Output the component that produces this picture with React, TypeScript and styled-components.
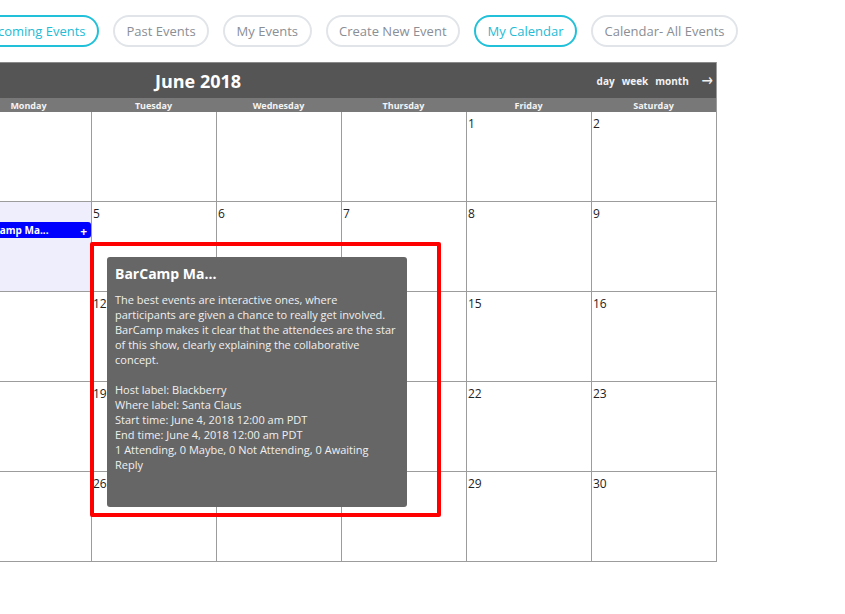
import React from "react";
import styled, { createGlobalStyle } from "styled-components";

const Global = createGlobalStyle`
  html, body { margin: 0; padding: 0; background: #fff; }
  body { font-family: "Open Sans", "Liberation Sans", sans-serif; }
`;

const Page = styled.div`
  position: relative;
  width: 845px;
  height: 614px;
  overflow: hidden;
`;

const TabRow = styled.div`
  display: flex;
  gap: 14px;
  margin-left: -33px;
  padding-top: 15px;
  white-space: nowrap;
`;

const Tab = styled.div<{ $active?: boolean }>`
  box-sizing: border-box;
  height: 32px;
  padding: 0 11.5px;
  display: flex;
  align-items: center;
  border-radius: 16px;
  border: 2px solid ${(p) => (p.$active ? "#22c1d9" : "#e1e5e9")};
  color: ${(p) => (p.$active ? "#22bcd6" : "#8a8e95")};
  font-size: 13px;
  flex-shrink: 0;
`;

const Calendar = styled.div`
  margin-left: -159px;
  margin-top: 15px;
  width: 876px;
  box-sizing: border-box;
  border-right: 1px solid #9c9c9c;
`;

const Header = styled.div`
  height: 36px;
  background: #555555;
  border-top: 1px solid #8a8a8a;
  box-sizing: border-box;
  display: flex;
  align-items: center;
  color: #fff;
`;

const LeftNav = styled.div`
  width: 314px;
  font-size: 13px;
  font-weight: 700;
  padding-left: 6px;
  box-sizing: border-box;
`;

const Title = styled.div`
  font-size: 18px;
  font-weight: 700;
  flex: 1;
  line-height: 1;
  padding-top: 1px;
`;

const RightNav = styled.div`
  display: flex;
  gap: 7px;
  font-size: 10px;
  font-weight: 700;
  padding-right: 2px;
  align-items: center;
  color: #f2f2f2;
`;

const Arrow = styled.span`
  margin-left: 4px;
  font-size: 17px;
  font-weight: 400;
  line-height: 1;
  font-family: "DejaVu Sans", sans-serif;
  transform: scaleX(0.8);
`;

const DayHead = styled.div`
  display: grid;
  grid-template-columns: repeat(7, 125px);
  height: 14px;
  background: #787878;
  color: #f4f4f4;
  font-size: 9px;
  font-weight: 700;
  line-height: 15px;
  text-align: center;
`;

const Week = styled.div`
  display: grid;
  grid-template-columns: repeat(7, 125px);
  height: 90px;
  box-sizing: border-box;
  border-bottom: 1px solid #9c9c9c;
`;

const Cell = styled.div<{ $shade?: boolean }>`
  position: relative;
  box-sizing: border-box;
  border-left: 1px solid #9c9c9c;
  background: ${(p) => (p.$shade ? "#eeeefc" : "#fff")};
  padding: 4px 1px 2px;
`;

const DayNum = styled.div`
  font-size: 12px;
  line-height: 16px;
  color: #222;
`;

const EventBar = styled.div`
  margin-left: 4px;
  margin-right: -1px;
  height: 16px;
  background: #0000ff;
  border-radius: 3px;
  color: #fff;
  font-size: 10px;
  font-weight: 700;
  display: flex;
  align-items: center;
  justify-content: space-between;
  padding: 0 4px;
  box-sizing: border-box;
`;

const Plus = styled.span`
  font-size: 12px;
  line-height: 1;
  padding-top: 3px;
`;

const Highlight = styled.div`
  position: absolute;
  left: 90px;
  top: 242px;
  width: 351px;
  height: 275px;
  box-sizing: border-box;
  border: 4px solid #ff0000;
  border-radius: 2px;
`;

const Tooltip = styled.div`
  position: absolute;
  left: 107px;
  top: 257px;
  width: 300px;
  height: 250px;
  box-sizing: border-box;
  background: #666666;
  border-radius: 3px;
  padding: 7px 8px;
  color: #f0f0f0;
`;

const TipTitle = styled.div`
  font-size: 14px;
  font-weight: 700;
  color: #fff;
  line-height: 20px;
  margin-bottom: 8px;
`;

const TipBody = styled.div`
  font-size: 11px;
  line-height: 15px;
`;

const Spacer = styled.div`
  height: 15px;
`;

const tabs = [
  { label: "Upcoming Events", active: true },
  { label: "Past Events" },
  { label: "My Events" },
  { label: "Create New Event" },
  { label: "My Calendar", active: true },
  { label: "Calendar- All Events" },
];

const days = ["Sunday", "Monday", "Tuesday", "Wednesday", "Thursday", "Friday", "Saturday"];

const weeks: (number | null)[][] = [
  [null, null, null, null, null, 1, 2],
  [3, 4, 5, 6, 7, 8, 9],
  [10, 11, 12, 13, 14, 15, 16],
  [17, 18, 19, 20, 21, 22, 23],
  [24, 25, 26, 27, 28, 29, 30],
];

export default function App() {
  return (
    <Page>
      <Global />
      <TabRow>
        {tabs.map((t) => (
          <Tab key={t.label} $active={t.active}>
            {t.label}
          </Tab>
        ))}
      </TabRow>
      <Calendar>
        <Header>
          <LeftNav>←</LeftNav>
          <Title>June 2018</Title>
          <RightNav>
            <span>day</span>
            <span>week</span>
            <span>month</span>
            <Arrow>→</Arrow>
          </RightNav>
        </Header>
        <DayHead>
          {days.map((d) => (
            <div key={d}>{d}</div>
          ))}
        </DayHead>
        {weeks.map((w, wi) => (
          <Week key={wi}>
            {w.map((d, di) => (
              <Cell key={di} $shade={d === 4}>
                {d !== null && <DayNum>{d}</DayNum>}
                {d === 4 && (
                  <EventBar>
                    <span>BarCamp Ma...</span>
                    <Plus>+</Plus>
                  </EventBar>
                )}
              </Cell>
            ))}
          </Week>
        ))}
      </Calendar>
      <Highlight />
      <Tooltip>
        <TipTitle>BarCamp Ma...</TipTitle>
        <TipBody>
          The best events are interactive ones, where participants are given a chance to really get involved.
          BarCamp makes it clear that the attendees are the star of this show, clearly explaining the
          collaborative concept.
          <Spacer />
          Host label: Blackberry
          <br />
          Where label: Santa Claus
          <br />
          Start time: June 4, 2018 12:00 am PDT
          <br />
          End time: June 4, 2018 12:00 am PDT
          <br />
          1 Attending, 0 Maybe, 0 Not Attending, 0 Awaiting Reply
        </TipBody>
      </Tooltip>
    </Page>
  );
}
